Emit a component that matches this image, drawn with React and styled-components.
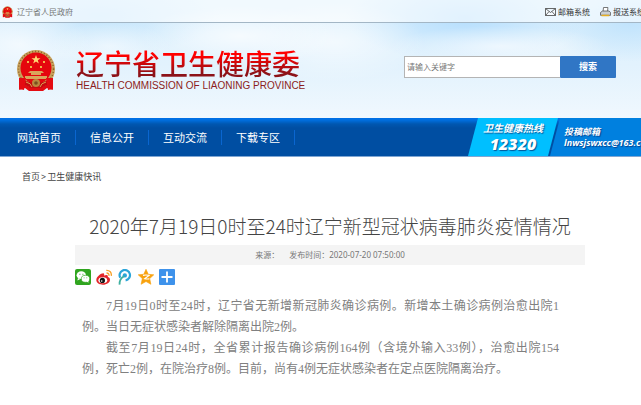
import React from "react";
import styled, { createGlobalStyle } from "styled-components";

const GlobalStyle = createGlobalStyle`
  * {
    box-sizing: border-box;
  }
  body {
    margin: 0;
    overflow: hidden;
    background: #fff;
    color: #666;
    font-family: "Noto Sans", "Noto Sans CJK SC", sans-serif;
    font-size: 8px;
  }
  h1, h2, p, ul {
    margin: 0;
    padding: 0;
    font-weight: 400;
  }
  a {
    color: inherit;
    text-decoration: none;
  }
`;

const Page = styled.div`
  min-width: 660px;
`;

const Header = styled.header`
  background:
    radial-gradient(ellipse 70px 40px at 20px 44px, rgba(255, 255, 255, 0.6), transparent),
    radial-gradient(ellipse 100px 30px at 240px 36px, rgba(255, 255, 255, 0.7), transparent),
    radial-gradient(ellipse 60px 24px at 110px 46px, rgba(255, 255, 255, 0.5), transparent),
    radial-gradient(ellipse 90px 40px at 335px 42px, rgba(255, 255, 255, 0.6), transparent),
    radial-gradient(ellipse 110px 20px at 500px 46px, rgba(255, 255, 255, 0.6), transparent),
    radial-gradient(ellipse 120px 40px at 100px 16px, #c4e5fc, transparent),
    radial-gradient(ellipse 120px 44px at 465px 18px, #b5defd, transparent),
    radial-gradient(ellipse 90px 40px at 630px 22px, #c0e3fc, transparent),
    linear-gradient(#dcf0fd, #e2f2fd 55%, #f0f8fe);
`;

const TopBar = styled.div`
  display: flex;
  align-items: center;
  justify-content: space-between;
  height: 23px;
  padding: 2px 15px 0 2px;
  border-bottom: 1px solid #a3b6c5;
  background: rgba(255, 255, 255, 0.6);
`;

const TopLinks = styled.nav`
  display: flex;
  gap: 10px;
`;

const TopLink = styled.a`
  display: flex;
  align-items: center;
  gap: ${(props) => props.$gap || "2px"};
  color: ${(props) => props.$color || "#333"};
  line-height: 12px;
  white-space: nowrap;
`;

const Banner = styled.div`
  display: flex;
  align-items: center;
  justify-content: space-between;
  height: 95px;
  padding: 0 44px 8px 16px;
`;

const Brand = styled.a`
  display: flex;
  align-items: center;
  gap: 20px;
  padding-top: 8px;
`;

const BrandName = styled.span`
  display: block;
  font-family: "Noto Sans CJK SC", sans-serif;
  font-size: 28px;
  line-height: 30px;
  font-weight: 500;
  color: transparent;
  background: linear-gradient(#f00 25%, #8c1218 85%);
  background-clip: text;
`;

const BrandSub = styled.span`
  display: block;
  font-family: "Liberation Sans", sans-serif;
  font-size: 10px;
  line-height: 16px;
  color: #8c1c20;
  white-space: nowrap;
`;

const SearchForm = styled.form`
  display: flex;
  width: 212px;
  height: 22px;
`;

const SearchInput = styled.input`
  flex: 1;
  min-width: 0;
  padding: 0 2px;
  border: 1px solid #b4b4b4;
  border-right: 0;
  background: #fff;
  font-family: inherit;
  font-size: 8px;
  outline: none;
  &::placeholder {
    color: #777;
    opacity: 1;
  }
`;

const SearchButton = styled.button`
  width: 56px;
  padding: 0;
  border: 0;
  border-radius: 1px;
  background: #3076c5;
  color: #fff;
  font-family: inherit;
  font-size: 9px;
  font-weight: 700;
`;

const MainNav = styled.nav`
  display: flex;
  height: 39px;
  border-bottom: 1px solid #7fa6d3;
  background: linear-gradient(#0070e6 0, #006fe0 2px, #0057b0 6px, #004ea2 10px);
`;

const NavList = styled.ul`
  display: flex;
  align-items: center;
  list-style: none;
  padding-left: 3px;
`;

const NavItem = styled.li`
  width: 73px;
  height: 15px;
  border-right: 1px solid #0a66d0;
  color: #fff;
  font-size: 11px;
  line-height: 15px;
  text-align: center;
`;

const Contacts = styled.div`
  display: flex;
  flex: 1;
  justify-content: flex-end;
  color: #fff;
  font-weight: 700;
  font-style: italic;
  text-shadow: 1px 1px 1px rgba(0, 40, 110, 0.7);
`;

const Hotline = styled.div`
  width: 90px;
  padding: 3px 0 0;
  background: #00bfff;
  clip-path: polygon(10px 0, 100% 0, 80px 100%, 0 100%);
  text-align: center;
  font-size: 10px;
  line-height: 14px;
`;

const HotlineNumber = styled.strong`
  display: block;
  font-size: 16px;
  line-height: 18px;
`;

const Mailbox = styled.a`
  width: 110px;
  margin-left: -8px;
  padding: 8px 0 0 14px;
  background: #0080df;
  clip-path: polygon(10px 0, 100% 0, 100% 100%, 0 100%);
  font-size: 9px;
  line-height: 11px;
  white-space: nowrap;
`;

const Breadcrumb = styled.nav`
  display: flex;
  gap: 1px;
  padding: 13px 22px 0;
  color: #444;
  font-size: 9px;
  line-height: 13px;
`;

const Article = styled.article`
  margin: 0 75px;
  padding-top: 30px;
`;

const Title = styled.h1`
  color: #444;
  font-family: "Noto Sans CJK SC", sans-serif;
  font-size: 19px;
  font-weight: 300;
  line-height: 26px;
  text-align: center;
  white-space: nowrap;
`;

const Meta = styled.div`
  display: flex;
  justify-content: center;
  gap: 10px;
  margin-top: 6px;
  background: #f4f4f4;
  color: #777;
  font-size: 8px;
  line-height: 20px;
`;

const ShareBar = styled.div`
  display: flex;
  gap: 5px;
  padding-top: 4px;
`;

const ShareButton = styled.button`
  width: 16px;
  height: 16px;
  padding: 0;
  border: 0;
  background: none;
  svg {
    display: block;
  }
`;

const Content = styled.div`
  padding: 11px 26px 0 7px;
  color: #808080;
  font-family: "Liberation Serif", "Noto Sans CJK SC", serif;
  font-size: 12px;
  line-height: 21px;
  text-align: justify;
  p {
    text-indent: 2em;
  }
`;

function Emblem({ width, height }) {
  return (
    <svg width={width} height={height} viewBox="0 0 40 43" aria-hidden="true">
      <path d="M6 30 3 41l6-2 4 3h14l4-3 6 2-3-11z" fill="#e40b12" />
      <circle cx="20" cy="20" r="19" fill="#c9a25c" />
      <circle cx="20" cy="20" r="17.5" fill="none" stroke="#8a6129" strokeWidth="1.5" strokeDasharray="1 2" />
      <circle cx="20" cy="19" r="15.5" fill="#e5060d" />
      <path d="m20 6 1.2 3.2h3.3l-2.7 2 1 3.3-2.8-2-2.8 2 1-3.3-2.7-2h3.3z" fill="#ffd873" />
      <path d="M11 12h2v2h-2zM27 12h2v2h-2zM14 17h2v2h-2zM24 17h2v2h-2z" fill="#f1b44c" />
      <path d="M14 22h12l2 2H12zM15 24h10v2H15zM9 27h22v3H9z" fill="#d9a65b" />
      <path d="M5 30q15 7 30 0l-2 5-8 4H15l-8-4z" fill="#c60a10" />
      <path d="M3 29h7l-2 12-5-1zM37 29h-7l2 12 5-1z" fill="#e40b12" />
      <circle cx="20" cy="34" r="4" fill="#b9893f" />
      <circle cx="20" cy="34" r="1.8" fill="#79501f" />
      <path d="M10 33q5 1 6 5M30 33q-5 1-6 5" fill="none" stroke="#d6a552" />
    </svg>
  );
}

const shareIcons = [
  {
    name: "微信",
    art: (
      <>
        <rect width="16" height="16" rx="2" fill="#30a51f" />
        <ellipse cx="6.3" cy="6.2" rx="4.7" ry="3.9" fill="#fff" />
        <path d="m3 9-.6 2.4L5.4 10z" fill="#fff" />
        <ellipse cx="10.5" cy="9.8" rx="4.2" ry="3.5" fill="#fff" stroke="#30a51f" strokeWidth=".7" />
        <path d="m11.5 12.5 2 1.3-.4-2.5z" fill="#fff" />
        <path d="M4.4 4.7h1v1h-1zM7.4 4.7h1v1h-1zM8.7 8.4h.8v.8h-.8zM11.4 8.4h.8v.8h-.8z" fill="#30a51f" />
      </>
    ),
  },
  {
    name: "新浪微博",
    art: (
      <>
        <path d="M7.3 4.2C4.8 4.2.3 7.7.3 11c0 3 3.2 4.7 6.5 4.7 4.2 0 7.2-2.4 7.2-5 0-1.7-1.2-2.3-2.2-2.7.5-1.8-.6-2.7-3.8-1.5.4-1.4.2-2.3-.7-2.3z" fill="#e32529" />
        <ellipse cx="6.8" cy="11.2" rx="4.4" ry="3" fill="#fff" />
        <circle cx="6.4" cy="11.4" r="2.6" fill="#111" />
        <circle cx="5.7" cy="12" r=".8" fill="#fff" />
        <path d="M10.5 4c1.8-.1 2.7 1.1 2.4 2.8M10.3 1.3c3.5-.2 5.4 2.2 5 5.5" fill="none" stroke="#f6a12b" strokeWidth="1.3" />
      </>
    ),
  },
  {
    name: "腾讯微博",
    art: (
      <>
        <path d="M3.3 8.8A5.2 5.2 0 1 1 8.6 11.3" fill="none" stroke="#2ba5d9" strokeWidth="2.2" />
        <circle cx="7.8" cy="6.4" r="2.2" fill="#2ba5d9" />
        <path d="M7.2 7C4 8.7 2.3 11.5 2.6 15.6" fill="none" stroke="#3fb0a0" strokeWidth="1.8" />
      </>
    ),
  },
  {
    name: "QQ空间",
    art: (
      <>
        <path d="m8 .3 2.3 5 5.5.5-4.1 3.8 1.2 5.7L8 12.5l-4.9 2.8 1.2-5.7L.2 5.8l5.5-.5z" fill="#f8a20f" stroke="#f8a20f" strokeWidth=".6" strokeLinejoin="round" />
        <path d="M5 6.4q3-.8 6 0L6.6 9.7q2.4.5 4.8.2" fill="none" stroke="#fff" strokeWidth="1.1" />
      </>
    ),
  },
  {
    name: "更多",
    art: (
      <>
        <rect width="16" height="16" rx="1" fill="#3e92eb" />
        <path d="M8 2.5v11M2.5 8h11" stroke="#fff" strokeWidth="1.8" />
      </>
    ),
  },
];

const navItems = ["网站首页", "信息公开", "互动交流", "下载专区"];

function App() {
  return (
    <>
      <GlobalStyle />
      <Page>
        <Header>
          <TopBar>
            <TopLink href="#" $gap="4px" $color="#777">
              <Emblem width={11} height={12} />
              辽宁省人民政府
            </TopLink>
            <TopLinks>
              <TopLink href="#">
                <svg width="11" height="8" viewBox="0 0 11 8" aria-hidden="true">
                  <path d="M.5.5h10v7H.5zM.5.5l5 4 5-4M.5 7.5 4 3.6M10.5 7.5 7 3.6" fill="#fff" fillOpacity=".5" stroke="#444" strokeWidth=".8" />
                </svg>
                邮箱系统
              </TopLink>
              <TopLink href="#">
                <svg width="11" height="10" viewBox="0 0 11 10" aria-hidden="true">
                  <path d="M3.5.5h4.4L7.5 5H3z" fill="#fff" stroke="#555" strokeWidth=".8" />
                  <path d="M.5 5.5 2.5 4h6.5l1.6 1.5v2.8H.5z" fill="#c9ced3" stroke="#555" strokeWidth=".8" />
                  <path d="M1.5 8.5h7.8" stroke="#e6ae22" strokeWidth="1.5" />
                </svg>
                报送系统
              </TopLink>
            </TopLinks>
          </TopBar>
          <Banner>
            <Brand href="#">
              <Emblem width={40} height={43} />
              <span>
                <BrandName>辽宁省卫生健康委</BrandName>
                <BrandSub>HEALTH COMMISSION OF LIAONING PROVINCE</BrandSub>
              </span>
            </Brand>
            <SearchForm>
              <SearchInput type="text" aria-label="搜索关键字" placeholder="请输入关键字" />
              <SearchButton type="button">搜索</SearchButton>
            </SearchForm>
          </Banner>
        </Header>

        <MainNav>
          <NavList>
            {navItems.map((item) => (
              <NavItem key={item}>
                <a href="#">{item}</a>
              </NavItem>
            ))}
          </NavList>
          <Contacts>
            <Hotline>
              卫生健康热线
              <HotlineNumber>12320</HotlineNumber>
            </Hotline>
            <Mailbox href="mailto:lnwsjswxcc@163.com">
              投稿邮箱
              <br />
              lnwsjswxcc@163.com
            </Mailbox>
          </Contacts>
        </MainNav>

        <Breadcrumb>
          <a href="#">首页</a>
          <span>&gt;</span>
          <a href="#">卫生健康快讯</a>
        </Breadcrumb>

        <Article>
          <Title>2020年7月19日0时至24时辽宁新型冠状病毒肺炎疫情情况</Title>
          <Meta>
            <span>来源：</span>
            <span>发布时间：2020-07-20 07:50:00</span>
          </Meta>
          <ShareBar>
            {shareIcons.map((icon) => (
              <ShareButton key={icon.name} type="button" aria-label={icon.name}>
                <svg width="16" height="16" viewBox="0 0 16 16">
                  {icon.art}
                </svg>
              </ShareButton>
            ))}
          </ShareBar>
          <Content>
            <p>
              7月19日0时至24时，辽宁省无新增新冠肺炎确诊病例。新增本土确诊病例治愈出院1例。当日无症状感染者解除隔离出院2例。
            </p>
            <p>
              截至7月19日24时，全省累计报告确诊病例164例（含境外输入33例），治愈出院154例，死亡2例，在院治疗8例。目前，尚有4例无症状感染者在定点医院隔离治疗。
            </p>
          </Content>
        </Article>
      </Page>
    </>
  );
}

export default App;
